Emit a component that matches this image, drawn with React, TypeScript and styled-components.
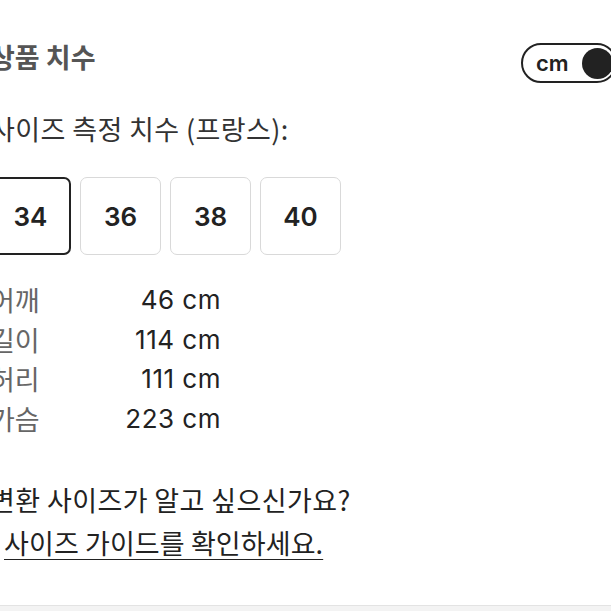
import React from "react";
import styled, { createGlobalStyle } from "styled-components";

const Global = createGlobalStyle`
  html, body { margin: 0; padding: 0; background: #fff; }
  body { overflow: hidden; }
`;

const KR = `"Noto Sans CJK KR", "Noto Sans", sans-serif`;
const NUM = `Inter, Roboto, "Noto Sans CJK KR", sans-serif`;
const GEO = `Inter, "Noto Sans", sans-serif`;

const Page = styled.div`
  width: 611px;
  height: 611px;
  overflow: hidden;
  display: flex;
  flex-direction: column;
  background: #fff;
`;

const Content = styled.div`
  margin: 0 -6px 0 -10px;
  padding-top: 42px;
  flex: 1;
  display: flex;
  flex-direction: column;
`;

const Header = styled.div`
  display: flex;
  justify-content: space-between;
  align-items: flex-start;
`;

const Title = styled.h2`
  margin: 0;
  font-family: ${KR};
  font-weight: 700;
  font-size: 27px;
  line-height: 30px;
  color: #555;
`;

const Toggle = styled.div`
  margin-top: 1px;
  box-sizing: border-box;
  width: 96px;
  height: 40px;
  border: 2px solid #222;
  border-radius: 20px;
  display: flex;
  align-items: center;
  justify-content: space-between;
  padding: 0 2px 0 13px;
`;

const ToggleLabel = styled.span`
  font-family: ${GEO};
  font-weight: 600;
  font-size: 22px;
  color: #222;
  line-height: 1;
  margin-top: -1px;
`;

const Knob = styled.span`
  width: 31px;
  height: 31px;
  border-radius: 50%;
  background: #222;
`;

const SubHeading = styled.p`
  margin: 28px 0 0;
  font-family: ${KR};
  font-weight: 400;
  font-size: 27px;
  letter-spacing: 0.4px;
  line-height: 36px;
  color: #333;
`;

const SizeRow = styled.div`
  display: flex;
  gap: 9px;
  margin-top: 30px;
`;

const SizeBox = styled.button<{ $active?: boolean }>`
  box-sizing: border-box;
  width: 81px;
  height: 78px;
  padding: 0;
  background: #fff;
  border-radius: 7px;
  border: ${(p) => (p.$active ? "2px solid #222" : "1px solid #d9d9d9")};
  font-family: ${GEO};
  font-weight: 600;
  font-size: 26px;
  color: #222;
  display: flex;
  align-items: center;
  justify-content: center;
`;

const Measures = styled.dl`
  margin: 25px 0 0;
  display: grid;
  grid-template-columns: 100px 131px;
`;

const Label = styled.dt`
  margin: 0;
  font-family: ${KR};
  font-weight: 400;
  font-size: 27px;
  line-height: 39.5px;
  color: #666;
`;

const Value = styled.dd`
  margin: 0;
  text-align: right;
  font-family: ${NUM};
  font-weight: 400;
  font-size: 26px;
  letter-spacing: 0.5px;
  font-variant-numeric: proportional-nums;
  line-height: 39.5px;
  color: #222;
`;

const Question = styled.p`
  margin: 40px 0 0;
  font-family: ${KR};
  font-size: 27px;
  letter-spacing: 0.4px;
  line-height: 43px;
  color: #222;
`;

const GuideLink = styled.a`
  align-self: flex-start;
  margin-left: 14px;
  font-family: ${KR};
  font-size: 27px;
  letter-spacing: 0.1px;
  line-height: 43px;
  color: #222;
  text-decoration: underline;
  text-underline-offset: 5px;
  text-decoration-thickness: 1px;
`;

const Footer = styled.div`
  margin-top: auto;
  height: 5px;
  border-top: 1px solid #e3e3e3;
  background: #f3f3f3;
`;

const sizes = ["34", "36", "38", "40"];
const rows: [string, string][] = [
  ["어깨", "46 cm"],
  ["길이", "114 cm"],
  ["허리", "111 cm"],
  ["가슴", "223 cm"],
];

export default function App() {
  return (
    <Page>
      <Global />
      <Content>
        <Header>
          <Title>상품 치수</Title>
          <Toggle>
            <ToggleLabel>cm</ToggleLabel>
            <Knob />
          </Toggle>
        </Header>
        <SubHeading>사이즈 측정 치수 (프랑스):</SubHeading>
        <SizeRow>
          {sizes.map((s, i) => (
            <SizeBox key={s} $active={i === 0}>
              {s}
            </SizeBox>
          ))}
        </SizeRow>
        <Measures>
          {rows.map(([l, v]) => (
            <React.Fragment key={l}>
              <Label>{l}</Label>
              <Value>{v}</Value>
            </React.Fragment>
          ))}
        </Measures>
        <Question>변환 사이즈가 알고 싶으신가요?</Question>
        <GuideLink href="#">사이즈 가이드를 확인하세요.</GuideLink>
      </Content>
      <Footer />
    </Page>
  );
}
